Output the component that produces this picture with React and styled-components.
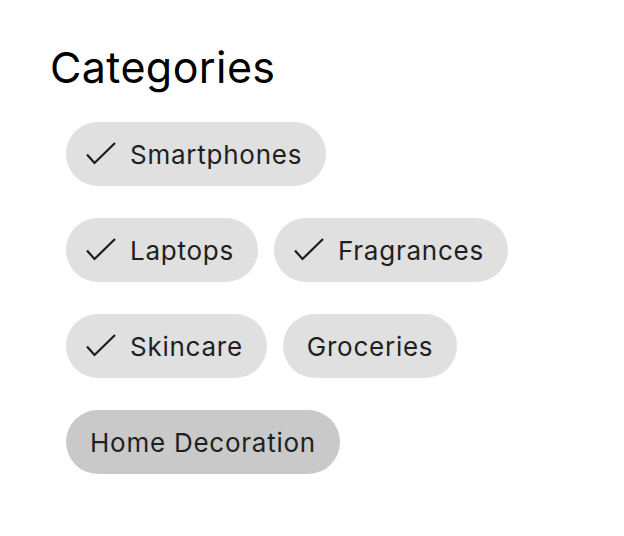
import styled, { createGlobalStyle } from 'styled-components';

const GlobalStyle = createGlobalStyle`
  body {
    margin: 0;
    background: #fff;
    font-family: Inter, "Liberation Sans", sans-serif;
  }
`;

const categories = [
  { name: 'Smartphones', selected: true },
  { name: 'Laptops', selected: true },
  { name: 'Fragrances', selected: true },
  { name: 'Skincare', selected: true },
  { name: 'Groceries', selected: false },
  { name: 'Home Decoration', selected: false, focused: true },
];

function CheckIcon() {
  return (
    <Check width="30" height="24" viewBox="0 0 30 24">
      <polyline
        points="1,12.5 8.5,21 29,1"
        fill="none"
        stroke="#1c1c1c"
        strokeWidth="2.2"
      />
    </Check>
  );
}

function App() {
  return (
    <Container>
      <GlobalStyle />
      <Title>Categories</Title>
      <ChipList>
        {categories.map(c => (
          <Chip key={c.name} $selected={c.selected} $focused={c.focused}>
            {c.selected && <CheckIcon />}
            <span>{c.name}</span>
          </Chip>
        ))}
      </ChipList>
    </Container>
  );
}

export default App;

const Container = styled.div`
  padding: 41px 50px;
`;

const Title = styled.h2`
  margin: 0 0 29px;
  font-size: 43px;
  line-height: 52px;
  font-weight: 400;
  letter-spacing: 0.4px;
  color: #000;
`;

const ChipList = styled.div`
  display: flex;
  flex-wrap: wrap;
  column-gap: 16px;
  row-gap: 32px;
  width: 456px;
  margin-left: 16px;
`;

const Chip = styled.div`
  display: flex;
  align-items: center;
  gap: 14px;
  height: 64px;
  box-sizing: border-box;
  padding: 0 24px 0 ${p => (p.$selected ? '20px' : '24px')};
  border-radius: 32px;
  background: ${p => (p.$focused ? '#c9c9c9' : '#e0e0e0')};
  color: #1f1f1f;
  font-size: 26px;
  letter-spacing: 0.75px;
`;

const Check = styled.svg`
  flex: none;
  display: block;
`;
